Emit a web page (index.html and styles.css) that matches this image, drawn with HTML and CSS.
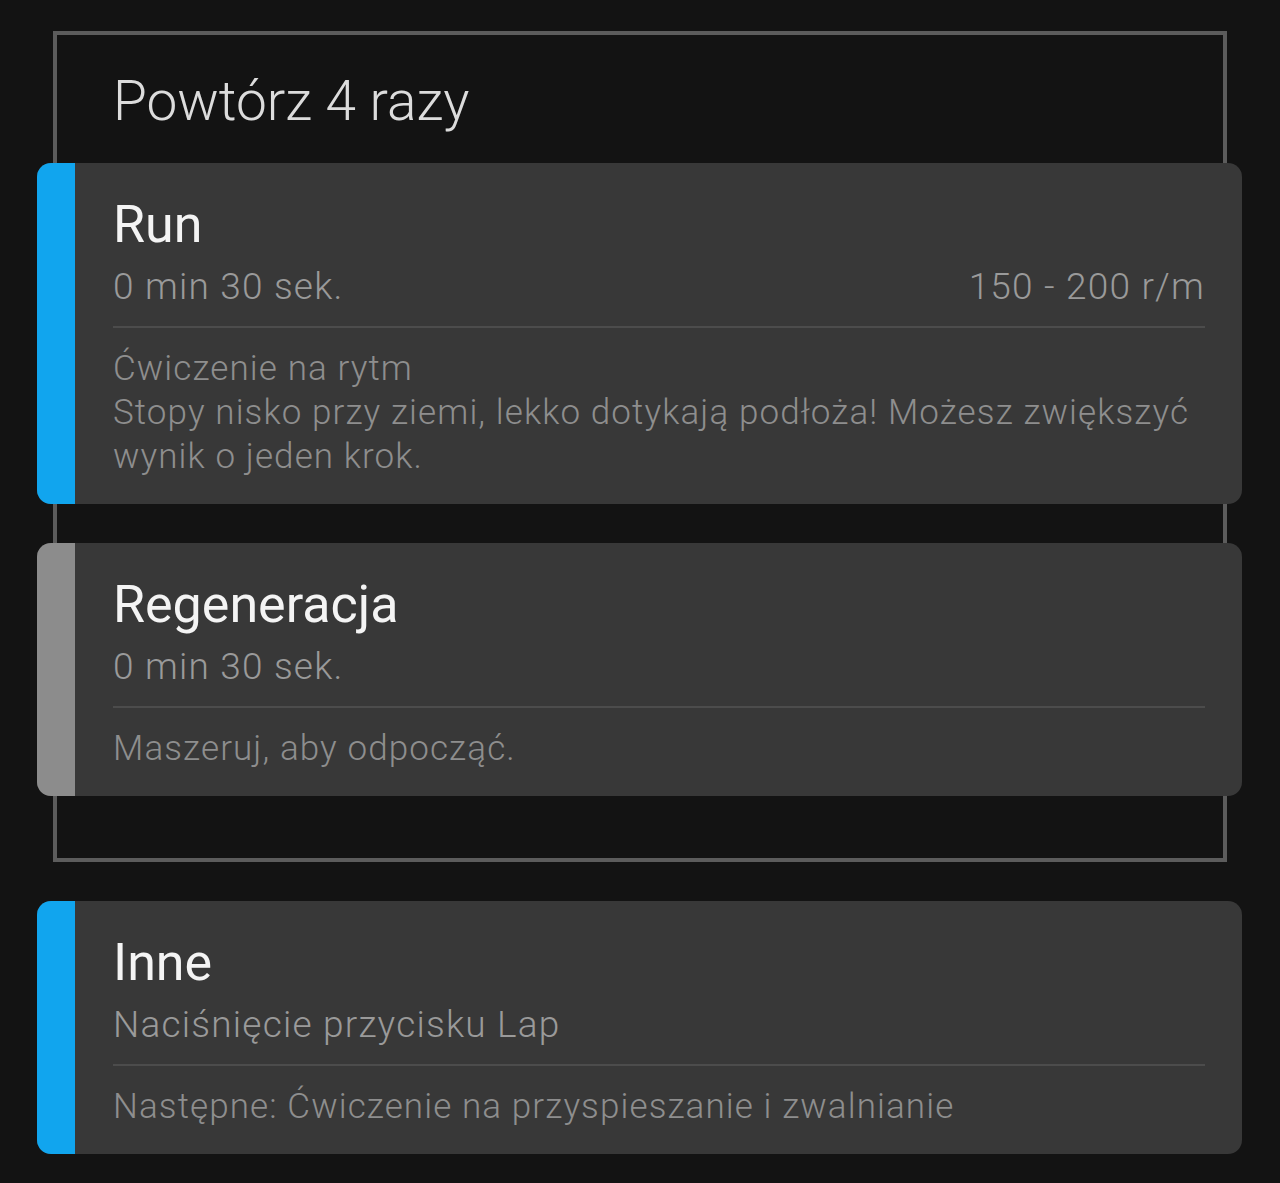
FILE: index.html
```html
<!DOCTYPE html>
<html lang="pl">
<head>
<meta charset="utf-8">
<title>Powtórz 4 razy</title>
<link rel="stylesheet" href="styles.css">
</head>
<body>
<main class="page">
  <section class="repeat">
    <h1 class="repeat-title">Powtórz 4 razy</h1>
    <article class="step">
      <div class="step-bar bar-blue"></div>
      <div class="step-body">
        <h2 class="step-title">Run</h2>
        <div class="step-meta">
          <span>0 min 30 sek.</span>
          <span>150 - 200 r/m</span>
        </div>
        <hr class="step-divider">
        <p class="step-desc">Ćwiczenie na rytm<br>Stopy nisko przy ziemi, lekko dotykają podłoża! Możesz zwiększyć wynik o jeden krok.</p>
      </div>
    </article>
    <article class="step">
      <div class="step-bar bar-gray"></div>
      <div class="step-body">
        <h2 class="step-title">Regeneracja</h2>
        <div class="step-meta">
          <span>0 min 30 sek.</span>
        </div>
        <hr class="step-divider">
        <p class="step-desc">Maszeruj, aby odpocząć.</p>
      </div>
    </article>
  </section>
  <article class="step step-standalone">
    <div class="step-bar bar-blue"></div>
    <div class="step-body">
      <h2 class="step-title">Inne</h2>
      <div class="step-meta">
        <span>Naciśnięcie przycisku Lap</span>
      </div>
      <hr class="step-divider">
      <p class="step-desc">Następne: Ćwiczenie na przyspieszanie i zwalnianie</p>
    </div>
  </article>
</main>
</body>
</html>
```

FILE: styles.css
```css
* {
  box-sizing: border-box;
}

html, body {
  margin: 0;
  padding: 0;
  background: #131313;
}

body {
  font-family: Roboto, "Noto Sans", "Liberation Sans", sans-serif;
  color: #f2f2f2;
}

.page {
  width: 1280px;
  padding: 31px 38px 0 37px;
}

.repeat {
  margin: 0 15px 0 16px;
  border: 4px solid #5c5c5c;
  padding: 33px 0 62px 0;
}

.repeat-title {
  margin: 0 0 29px 56px;
  font-size: 55px;
  line-height: 66px;
  font-weight: 300;
  color: #dcdcdc;
}

.step {
  display: flex;
  background: #383838;
  border-radius: 14px;
  overflow: hidden;
  margin: 0 -19px 39px -20px;
}

.repeat .step:last-child {
  margin-bottom: 0;
}

.step-standalone {
  margin: 39px 0 0 0;
}

.step-bar {
  width: 38px;
  flex: 0 0 38px;
}

.bar-blue {
  background: #11a5ee;
}

.bar-gray {
  background: #8c8c8c;
}

.step-body {
  flex: 1;
  padding: 30px 37px 25px 38px;
}

.step-title {
  margin: 0;
  font-size: 52px;
  line-height: 64px;
  font-weight: 400;
  color: #f4f4f4;
}

.step-meta {
  margin-top: 8px;
  display: flex;
  justify-content: space-between;
  font-size: 37px;
  line-height: 44px;
  font-weight: 300;
  letter-spacing: 1.2px;
  color: #9a9a9a;
}

.step-divider {
  margin: 17px 0 0 0;
  border: 0;
  height: 2px;
  background: #4c4c4c;
}

.step-desc {
  margin: 19px 0 0 0;
  font-size: 35px;
  line-height: 44px;
  font-weight: 300;
  letter-spacing: 1.1px;
  color: #8e8e8e;
}
```
